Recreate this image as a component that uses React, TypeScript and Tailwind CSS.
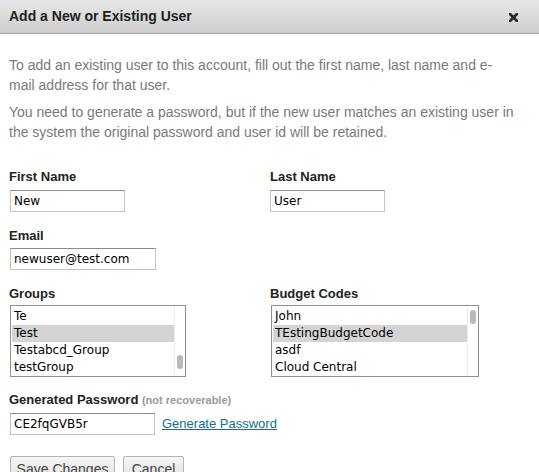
import React from "react";

const inputCls =
  "h-[22px] border border-[#c3c3c3] border-t-[#8c8c8c] bg-white px-[3px] text-[12px] text-black outline-none font-['DejaVu_Sans',sans-serif]";

function ListBox({
  items,
  selected,
  thumbTop,
  width,
}: {
  items: string[];
  selected: number;
  thumbTop: boolean;
  width: string;
}) {
  return (
    <div
      className={`${width} h-[72px] border border-[#8f8f8f] bg-white flex font-['DejaVu_Sans',sans-serif] text-[12px] text-black`}
    >
      <div className="flex-1 pt-[2px] pl-[1px]">
        {items.map((it, i) => (
          <div
            key={it}
            className={`h-[17px] leading-[17px] pl-[2px] ${i === selected ? "bg-[#d4d4d4]" : ""}`}
          >
            {it}
          </div>
        ))}
      </div>
      <div className={`w-[11px] border-l border-[#ececec] flex flex-col ${thumbTop ? "justify-start pt-[4px]" : "justify-end pb-[7px]"} items-center`}>
        <div className="w-[6px] h-[14px] rounded-full bg-[#b9b9b9]" />
      </div>
    </div>
  );
}

export default function App() {
  return (
    <div className="w-[539px] h-[472px] overflow-hidden bg-white font-['Liberation_Sans',Arial,sans-serif]">
      <div className="h-[34px] border-b border-[#a5a5a5] bg-linear-to-b from-[#e8e8e8] to-[#cdcdcd] flex items-center justify-between pl-[9px] pr-[21px]">
        <span className="text-[14px] font-bold text-[#1e1e1e]">Add a New or Existing User</span>
        <svg width="9" height="9" viewBox="0 0 9 9" className="mt-[1px]">
          <path d="M1 1 L8 8 M8 1 L1 8" stroke="#2a2a2a" strokeWidth="2.8" strokeLinecap="square" />
        </svg>
      </div>

      <div className="pl-[9px] pt-[21px]">
        <p className="text-[14px] leading-[20px] text-[#7a7a7a] whitespace-nowrap">
          To add an existing user to this account, fill out the first name, last name and e-
          <br />
          mail address for that user.
        </p>
        <p className="mt-[7px] text-[14px] leading-[20px] text-[#7a7a7a] whitespace-nowrap">
          You need to generate a password, but if the new user matches an existing user in
          <br />
          the system the original password and user id will be retained.
        </p>

        <div className="mt-[27px] grid grid-cols-[261px_1fr]">
          <div>
            <div className="text-[13px] leading-[16px] font-bold text-[#222]">First Name</div>
            <input readOnly defaultValue="New" className={`${inputCls} mt-[5px] ml-[1px] w-[115px]`} />
          </div>
          <div>
            <div className="text-[13px] leading-[16px] font-bold text-[#222]">Last Name</div>
            <input readOnly defaultValue="User" className={`${inputCls} mt-[5px] w-[115px]`} />
          </div>
        </div>

        <div className="mt-[16px]">
          <div className="text-[13px] leading-[16px] font-bold text-[#222]">Email</div>
          <input readOnly defaultValue="newuser@test.com" className={`${inputCls} mt-[4px] ml-[1px] w-[146px]`} />
        </div>

        <div className="mt-[16px] grid grid-cols-[261px_1fr]">
          <div>
            <div className="text-[13px] leading-[16px] font-bold text-[#222]">Groups</div>
            <div className="mt-[3px] ml-[1px]">
              <ListBox
                items={["Te", "Test", "Testabcd_Group", "testGroup"]}
                selected={1}
                thumbTop={false}
                width="w-[176px]"
              />
            </div>
          </div>
          <div>
            <div className="text-[13px] leading-[16px] font-bold text-[#222]">Budget Codes</div>
            <div className="mt-[3px] ml-[1px]">
              <ListBox
                items={["John", "TEstingBudgetCode", "asdf", "Cloud Central"]}
                selected={1}
                thumbTop={true}
                width="w-[208px]"
              />
            </div>
          </div>
        </div>

        <div className="mt-[15px]">
          <div className="text-[13px] leading-[16px] font-bold text-[#222]">
            Generated Password{" "}
            <span className="text-[11px] text-[#9a9a9a]">(not recoverable)</span>
          </div>
          <div className="mt-[5px] flex items-center">
            <input readOnly defaultValue="CE2fqGVB5r" className={`${inputCls} ml-[1px] w-[145px]`} />
            <a href="#" className="ml-[7px] text-[13px] text-[#14708a] underline">
              Generate Password
            </a>
          </div>
        </div>

        <div className="mt-[21px] ml-[1px] flex gap-[8px]">
          <button className="h-[26px] w-[105px] border border-[#b3b3b3] rounded-[2px] bg-linear-to-b from-[#f7f7f7] to-[#dedede] text-[14px] text-[#444]">
            Save Changes
          </button>
          <button className="h-[26px] w-[61px] border border-[#b3b3b3] rounded-[2px] bg-linear-to-b from-[#f7f7f7] to-[#dedede] text-[14px] text-[#444]">
            Cancel
          </button>
        </div>
      </div>
    </div>
  );
}
